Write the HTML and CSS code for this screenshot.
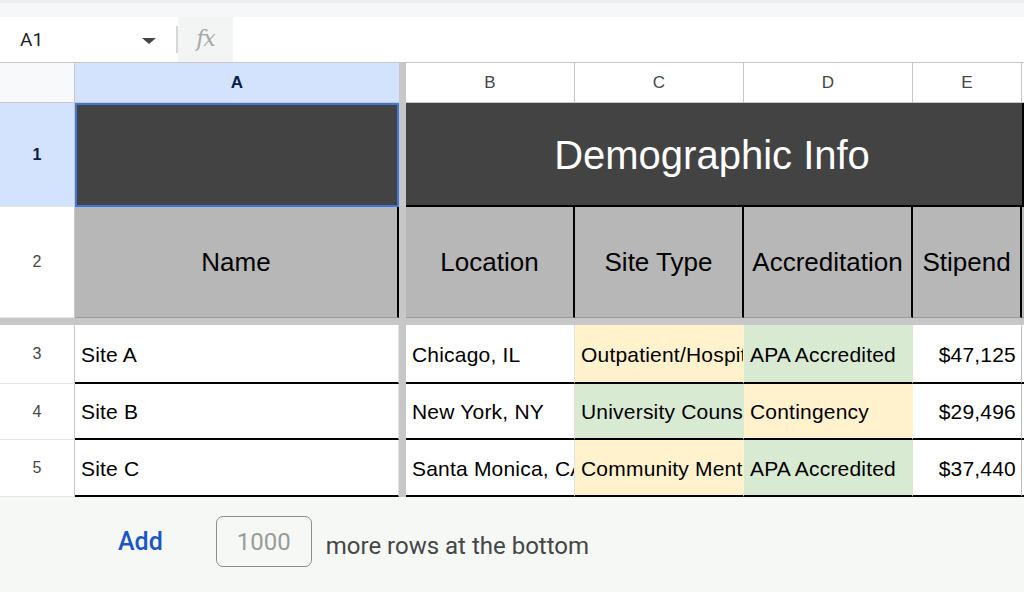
FILE: index.html
```html
<!DOCTYPE html>
<html>
<head>
<meta charset="utf-8">
<link rel="stylesheet" href="styles.css">
</head>
<body>
<div class="topstrip"></div>
<div class="formula-bar">
  <div class="namebox">
    <span class="cellref">A1</span>
    <span class="caret"></span>
  </div>
  <div class="sep"></div>
  <div class="fx">fx</div>
  <div class="fx-input"></div>
</div>
<div class="grid">
  <div class="vdiv"></div>
  <div class="hdiv"></div>

  <!-- header row -->
  <div class="corner"></div>
  <div class="colhdr sel">A</div>
  <div class="colhdr">B</div>
  <div class="colhdr">C</div>
  <div class="colhdr">D</div>
  <div class="colhdr">E</div>
  <div class="colhdr last"></div>

  <!-- row 1 -->
  <div class="rowhdr sel">1</div>
  <div class="cell dark a1"></div>
  <div class="cell dark title">Demographic Info</div>

  <!-- row 2 -->
  <div class="rowhdr">2</div>
  <div class="cell gray hd">Name</div>
  <div class="cell gray hd">Location</div>
  <div class="cell gray hd">Site Type</div>
  <div class="cell gray hd">Accreditation</div>
  <div class="cell gray hd">Stipend</div>
  <div class="cell gray hd end"></div>

  <!-- row 3 -->
  <div class="rowhdr">3</div>
  <div class="cell data">Site A</div>
  <div class="cell data">Chicago, IL</div>
  <div class="cell data yellow">Outpatient/Hospital</div>
  <div class="cell data green">APA Accredited</div>
  <div class="cell data num">$47,125</div>
  <div class="cell data end"></div>

  <!-- row 4 -->
  <div class="rowhdr">4</div>
  <div class="cell data">Site B</div>
  <div class="cell data">New York, NY</div>
  <div class="cell data green">University Counseling Center</div>
  <div class="cell data yellow">Contingency</div>
  <div class="cell data num">$29,496</div>
  <div class="cell data end"></div>

  <!-- row 5 -->
  <div class="rowhdr">5</div>
  <div class="cell data">Site C</div>
  <div class="cell data">Santa Monica, CA</div>
  <div class="cell data yellow">Community Mental Health</div>
  <div class="cell data green">APA Accredited</div>
  <div class="cell data num">$37,440</div>
  <div class="cell data end"></div>
</div>
<div class="addrows">
  <span class="add">Add</span>
  <span class="count">1000</span>
  <span class="more">more rows at the bottom</span>
</div>
</body>
</html>
```

FILE: styles.css
```css
* { box-sizing: border-box; }
html, body { margin: 0; padding: 0; }
body {
  width: 1024px;
  height: 592px;
  overflow: hidden;
  background: #ffffff;
  font-family: "Liberation Sans", Arial, sans-serif;
}
.topstrip {
  height: 17px;
  background: #f6f7f9;
  border-top: 3px solid #eceef2;
}
.formula-bar {
  height: 46px;
  display: flex;
  align-items: stretch;
  background: #ffffff;
  border-bottom: 1px solid #c7c7c7;
}
.namebox {
  width: 176px;
  display: flex;
  align-items: center;
  padding-left: 20px;
  padding-right: 20px;
  justify-content: space-between;
}
.cellref {
  font-family: Roboto, "Liberation Sans", sans-serif;
  font-size: 19px;
  color: #1f1f1f;
}
.caret {
  width: 0; height: 0;
  border-left: 7px solid transparent;
  border-right: 7px solid transparent;
  border-top: 6px solid #444746;
  margin-top: 2px;
}
.sep {
  width: 2px;
  background: #d5d6d8;
  margin: 9px 0 9px 0;
}
.fx {
  width: 55px;
  background: #f3f4f4;
  font-family: "DejaVu Serif", "Liberation Serif", serif;
  font-style: italic;
  font-size: 22px;
  color: #a8a8a8;
  display: flex;
  align-items: center;
  justify-content: center;
  padding-bottom: 2px;
  letter-spacing: -1px;
}
.fx-input { flex: 1; }

.grid {
  display: grid;
  grid-template-columns: 75px 324px 7px 169px 169px 169px 109px 2px;
  grid-template-rows: 40px 104px 111px 7px 59px 56px 57px;
}
.vdiv {
  grid-column: 3;
  grid-row: 1 / 8;
  background: #c7c7c7;
}
.hdiv {
  grid-column: 1 / 9;
  grid-row: 4;
  background: #c7c7c7;
}
.corner { grid-column: 1; grid-row: 1; }
.colhdr.sel { grid-column: 2; grid-row: 1; }
.corner {
  background: #f8f9fa;
  border-right: 1px solid #c7c7c7;
  border-bottom: 1px solid #c7c7c7;
}
.colhdr {
  grid-row: 1;
  font-family: "Liberation Sans", Arial, sans-serif;
  font-size: 17px;
  color: #444746;
  display: flex;
  align-items: center;
  justify-content: center;
  border-right: 1px solid #c7c7c7;
  border-bottom: 1px solid #c7c7c7;
  background: #ffffff;
}
.colhdr.sel {
  background: #d3e3fd;
  color: #041e49;
  font-weight: 700;
  border-right: none;
}
.colhdr.last { border-right: none; }
.rowhdr {
  grid-column: 1;
  font-family: "Liberation Sans", Arial, sans-serif;
  font-size: 16px;
  color: #444746;
  display: flex;
  align-items: center;
  justify-content: center;
  border-right: 1px solid #c7c7c7;
  border-bottom: 1px solid #e6e6e6;
  background: #ffffff;
}
.rowhdr.sel {
  background: #d3e3fd;
  color: #041e49;
  font-weight: 700;
}
.cell {
  overflow: hidden;
  white-space: nowrap;
  display: flex;
  align-items: center;
}
.dark { background: #434343; }
.a1 {
  grid-column: 2;
  border: 2px solid #3f78d8;
}
.title {
  grid-column: 4 / 9;
  justify-content: center;
  color: #ffffff;
  font-size: 40px;
  border-bottom: 2px solid #000000;
  border-right: 2px solid #000000;
  padding-right: 4px;
  padding-top: 2px;
}
.gray {
  background: #b7b7b7;
  border-right: 2px solid #000000;
  border-bottom: 1px solid #9a9a9a;
}
.hd {
  justify-content: center;
  font-size: 26px;
  color: #000000;
}
.gray.end { border-right: none; }
.data {
  font-size: 21px;
  letter-spacing: 0.2px;
  color: #000000;
  padding-left: 6px;
  padding-top: 2px;
  border-bottom: 2px solid #000000;
  border-right: 1px solid #e2e2e2;
  background: #ffffff;
}
.data.end { border-right: none; padding: 0; }
.yellow { background: #fff2cc; border-right-color: #fff2cc; }
.green { background: #d9ead3; border-right-color: #d9ead3; }
.num {
  justify-content: flex-end;
  padding-left: 0;
  padding-right: 5px;
  border-right: 1px solid #c0c0c0;
}

.addrows {
  height: 95px;
  background: #f6f8f6;
  display: flex;
  align-items: center;
  padding-left: 118px;
  font-family: Roboto, "Liberation Sans", sans-serif;
}
.add {
  color: #1a56c5;
  font-size: 25px;
  font-weight: 500;
  margin-right: 53px;
  margin-top: -6px;
}
.count {
  width: 96px;
  height: 51px;
  border: 1px solid #8d8d8d;
  border-radius: 7px;
  background: #f6f8f6;
  color: #9a9a9a;
  font-size: 24px;
  display: flex;
  align-items: center;
  justify-content: center;
  margin-top: -6px;
  margin-right: 14px;
}
.more {
  color: #444746;
  font-size: 24px;
  margin-top: 2px;
}
```
